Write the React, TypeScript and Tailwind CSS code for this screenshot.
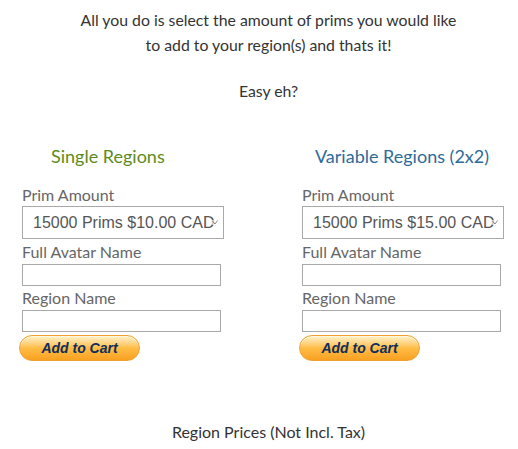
import { useState } from 'react';

interface RegionFormProps {
  title: string;
  titleClass: string;
  titlePad: string;
  price: string;
}

function AddToCartButton() {
  return (
    <button
      type="button"
      className="mt-[3px] ml-[-3px] flex h-[26px] w-[121px] items-center justify-center rounded-full border border-[#f0a030] bg-gradient-to-b from-[#fff2c8] via-[#ffbd45] to-[#f8a11f] shadow-[inset_0_1px_0_#fff8e0]"
    >
      <span className="font-['Liberation_Sans',Arial,sans-serif] text-[14px] font-bold italic leading-none text-[#0f2e5e]">
        Add to Cart
      </span>
    </button>
  );
}

function RegionForm({ title, titleClass, titlePad, price }: RegionFormProps) {
  const [avatar, setAvatar] = useState('');
  const [region, setRegion] = useState('');

  return (
    <div className="w-[280px] shrink-0 pl-[22px]">
      <h2 className={`text-[18px] leading-[24px] font-normal ${titlePad} ${titleClass}`}>
        {title}
      </h2>

      <label className="mt-[17px] block text-[16px] leading-[20px] text-[#666]">
        Prim Amount
      </label>
      <div className="relative mt-[1px] h-[33px] w-[202px]">
        <select
          className="h-full w-full appearance-none overflow-hidden border border-[#a9a9a9] bg-white pl-[10px] pr-[4px] font-['Liberation_Sans',Arial,sans-serif] text-[16px] text-[#555] outline-none"
          defaultValue="15000"
        >
          <option value="15000">15000 Prims {price} CAD</option>
        </select>
        {/* tiny dropdown chevron drawn over the text end */}
        <svg
          className="pointer-events-none absolute top-[14px] right-[6px] bg-white/60"
          width="6"
          height="5"
          viewBox="0 0 6 5"
        >
          <path d="M0.5 1 L3 4 L5.5 0.5" fill="none" stroke="#888" strokeWidth="1" />
        </svg>
      </div>

      <label className="mt-[3px] block text-[16px] leading-[20px] text-[#666]">
        Full Avatar Name
      </label>
      <input
        value={avatar}
        onChange={(e) => setAvatar(e.target.value)}
        className="mt-[2px] block h-[22px] w-[199px] border border-[#a9a9a9] bg-white outline-none"
      />

      <label className="mt-[2px] block text-[16px] leading-[20px] text-[#666]">
        Region Name
      </label>
      <input
        value={region}
        onChange={(e) => setRegion(e.target.value)}
        className="mt-[2px] block h-[22px] w-[199px] border border-[#a9a9a9] bg-white outline-none"
      />

      <AddToCartButton />
    </div>
  );
}

export default function App() {
  return (
    <div className="h-[449px] w-[518px] overflow-hidden bg-white font-['Lato','Open_Sans',sans-serif] text-[#333]">
      <div className="pt-[7px] pl-[19px] text-center text-[15.8px] leading-[25px]">
        <p>
          All you do is select the amount of prims you would like
          <br />
          to add to your region(s) and thats it!
        </p>
        <p className="mt-[21px]">Easy eh?</p>
      </div>

      <div className="mt-[41px] flex">
        <RegionForm
          title="Single Regions"
          titleClass="text-[#5c8b20]"
          titlePad="pl-[29px]"
          price="$10.00"
        />
        <RegionForm
          title="Variable Regions (2x2)"
          titleClass="text-[#2e6b98]"
          titlePad="pl-[13px]"
          price="$15.00"
        />
      </div>

      <p className="mt-[58px] pl-[19px] text-center text-[16px] leading-[25px]">
        Region Prices (Not Incl. Tax)
      </p>
    </div>
  );
}
